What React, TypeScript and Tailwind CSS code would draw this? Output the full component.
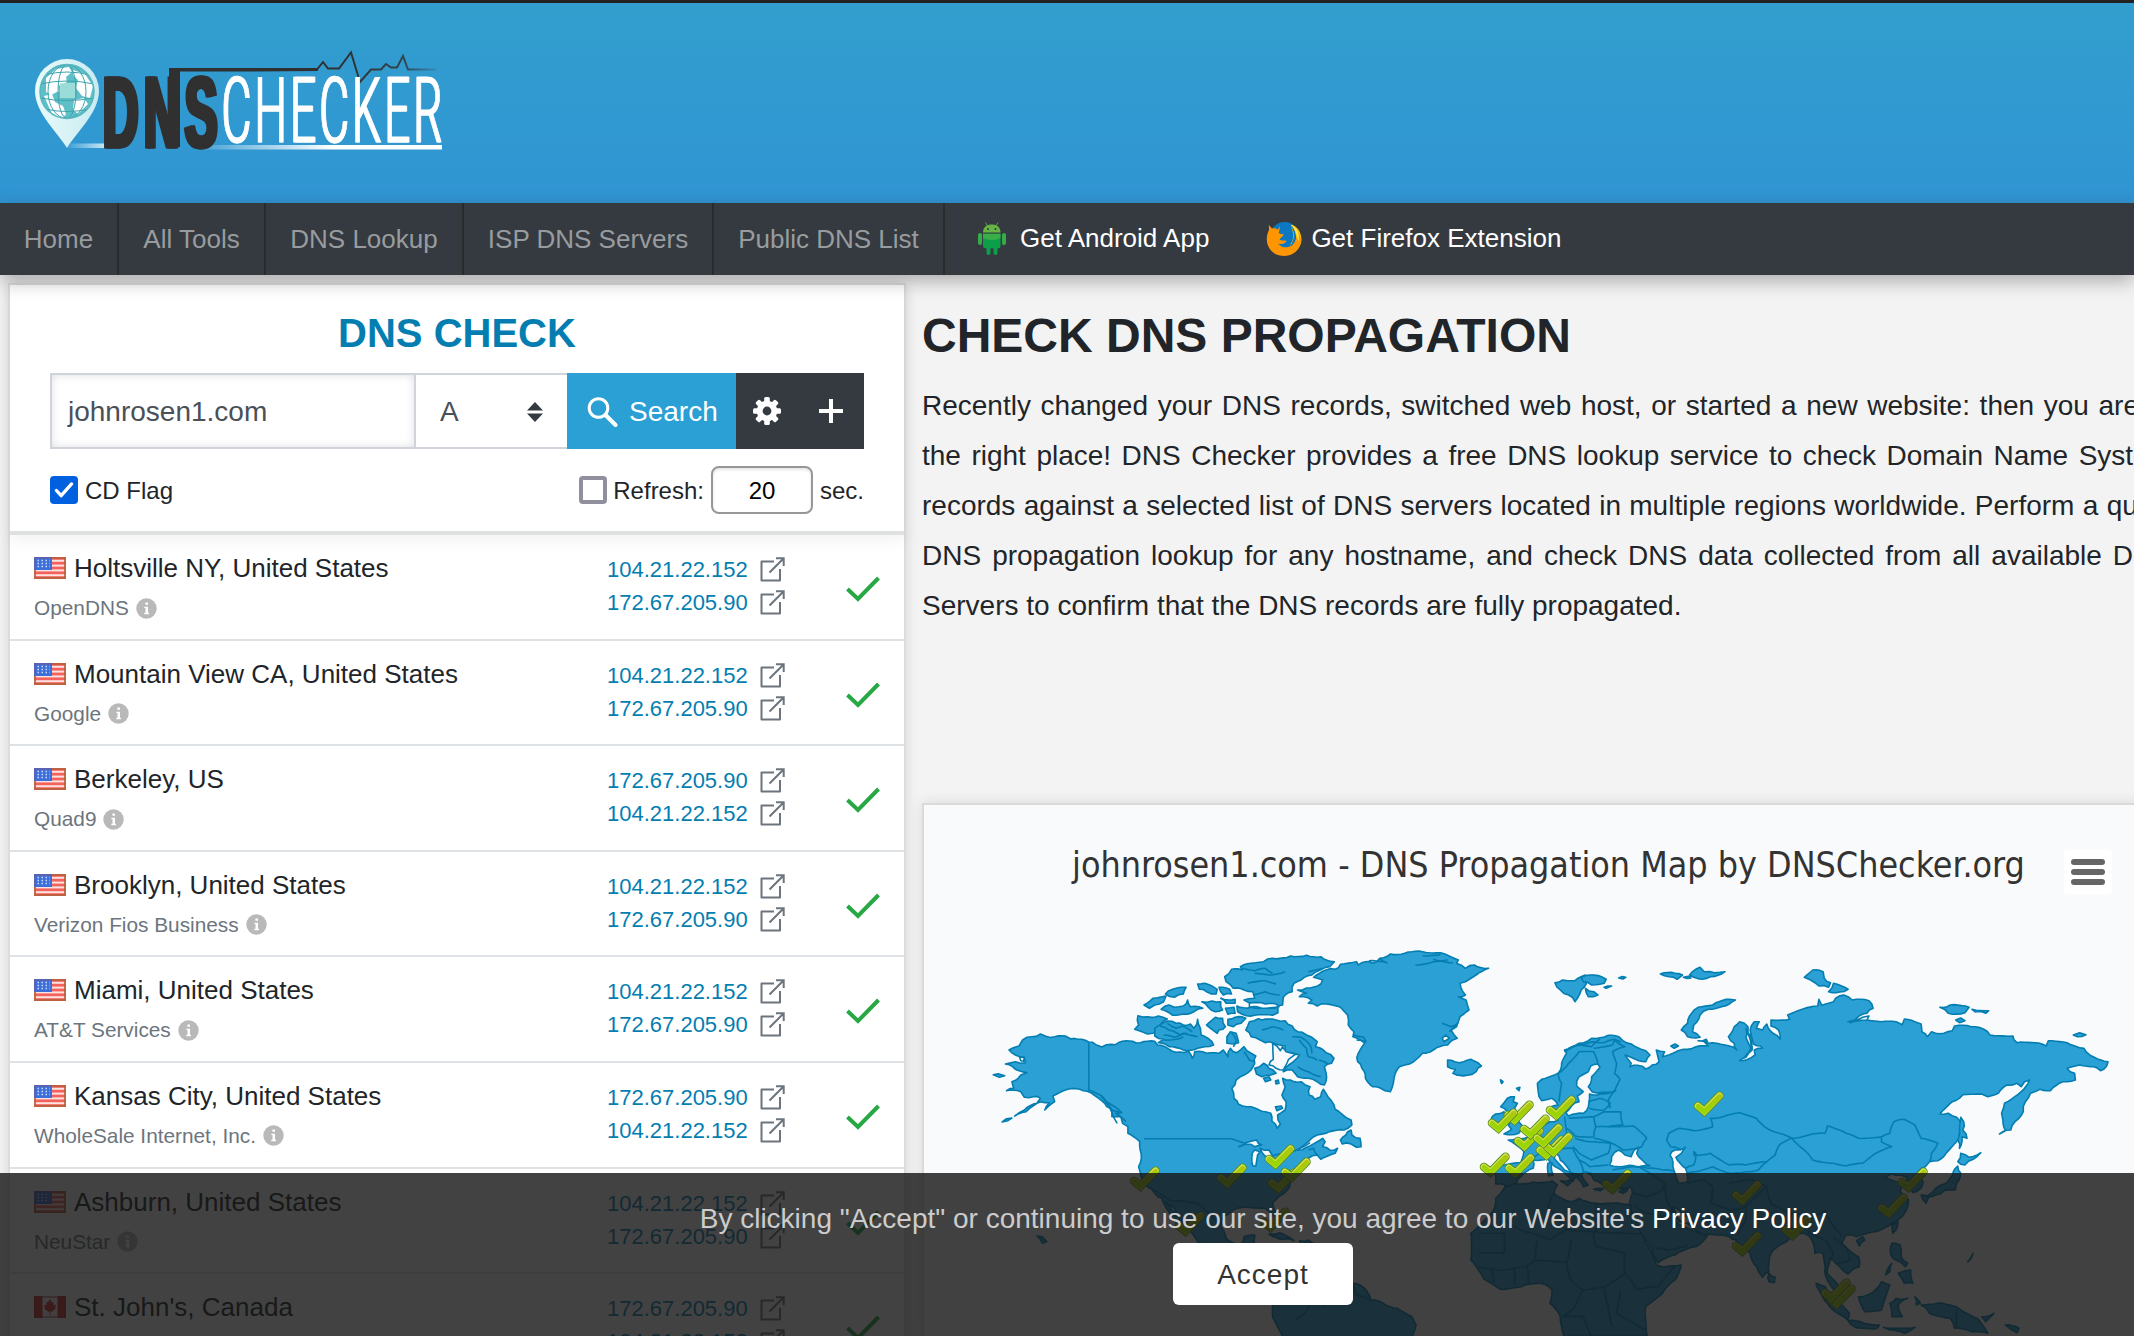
import React from "react";

type Pt = [number, number];

/* ---------- map geometry ---------- */

const west = (x: number, y: number): Pt => [970 + x / 2.8, 920 + y / 3];
const east = (x: number, y: number): Pt => [1480 + x / 2.3976, 920 + y / 3];

function points(src: string, proj: (x: number, y: number) => Pt): Pt[] {
  return src
    .trim()
    .split(/\s+/)
    .map((p) => {
      const [x, y] = p.split(",").map(Number);
      return proj(x, y);
    });
}

// Splits every edge and nudges the new points to give a coastline texture.
function rough(pts: Pt[], closed: boolean, amount: number): string {
  const out: Pt[] = [];
  const n = pts.length;
  for (let i = 0; i < n; i++) {
    out.push(pts[i]);
    if (!closed && i === n - 1) break;
    const a = pts[i];
    const b = pts[(i + 1) % n];
    const len = Math.hypot(b[0] - a[0], b[1] - a[1]);
    const steps = Math.floor(len / 3.5);
    for (let k = 1; k < steps; k++) {
      const t = k / steps;
      const r = Math.sin(a[0] * 12.9 + a[1] * 7.3 + k * 37.7) * amount;
      out.push([
        a[0] + (b[0] - a[0]) * t - ((b[1] - a[1]) / len) * r,
        a[1] + (b[1] - a[1]) * t + ((b[0] - a[0]) / len) * r,
      ]);
    }
  }
  return "M" + out.map((p) => p[0].toFixed(1) + "," + p[1].toFixed(1)).join("L") + (closed ? "Z" : "");
}

const westLand = [
  // mainland
  "112,390 140,378 150,360 175,350 200,342 215,349 240,350 270,348 285,357 305,358 335,366 355,374 372,381 385,374 410,374 440,362 458,364 480,368 520,364 528,375 560,388 590,396 615,394 625,415 632,395 665,400 700,400 712,390 725,410 732,385 750,398 770,380 790,400 803,408 800,430 790,450 770,465 748,480 736,505 742,535 755,553 790,560 820,574 845,580 848,603 863,625 872,612 864,585 885,570 888,545 876,525 885,500 878,475 900,480 930,485 955,500 952,525 968,538 985,530 992,508 1005,530 1022,555 1025,568 1045,583 1070,600 1072,615 1050,630 1000,640 975,645 950,665 920,690 945,682 990,655 997,665 990,680 1010,690 1032,685 1025,700 985,718 975,705 950,715 920,745 895,770 898,800 870,828 850,848 860,880 850,890 830,865 780,862 740,870 712,890 705,920 720,955 760,975 770,950 800,945 795,990 700,1000 640,965 600,910 575,865 550,845 580,890 592,920 560,875 540,835 520,820 500,800 482,770 475,740 482,700 478,665 445,640 445,620 430,610 425,590 400,590 395,565 380,550 350,525 320,512 280,507 250,520 235,528 240,545 212,570 225,548 200,545 160,575 128,588 155,570 190,550 200,535 180,530 155,532 145,515 105,512 125,505 120,485 145,465 162,458 130,448 102,432 130,425 158,428 155,412 130,405",
  "93,606 105,596 120,594 108,602",
  "68,464 82,461 100,467 85,472",
  // Victoria and Banks islands
  "473,287 500,290 530,288 555,297 535,315 515,340 500,342 464,328 475,315",
  "520,325 555,303 580,310 600,315 620,312 630,325 640,298 648,325 650,345 680,365 685,375 660,380 640,385 600,390 560,380 530,368 545,358 520,348",
  "665,315 690,292 710,295 718,320 700,330 695,340 680,328",
  "725,298 745,292 775,295 762,310 740,320 725,315",
  "722,350 732,335 748,340 755,368 740,372 722,370",
  // Baffin
  "775,330 785,305 810,296 820,300 860,300 885,302 905,318 920,335 945,345 960,352 975,365 970,380 1000,398 1022,415 1015,430 995,440 1000,460 995,495 975,485 950,475 920,470 905,450 880,455 895,435 925,405 905,400 880,402 885,378 870,375 850,368 830,368 815,360 790,350",
  "800,445 825,430 840,445 860,460 845,465 820,470 805,462",
  "825,475 840,470 845,480 830,485",
  "858,483 866,480 868,490 860,492",
  "858,560 875,558 878,565 862,572",
  // Ellesmere and Devon
  "760,140 790,130 825,125 850,115 900,108 945,106 985,110 1023,125 1010,140 960,165 930,180 910,190 905,215 880,232 878,255 840,258 800,252 770,240 800,235 795,215 770,210 740,205 720,185 716,170 735,148 765,150",
  "750,258 790,262 865,262 865,278 850,286 800,286 765,283 752,275",
  "640,192 660,190 695,208 692,222 665,215 645,208",
  "700,202 730,208 735,222 712,225",
  "705,235 745,238 745,250 720,250",
  "718,265 742,262 745,280 725,283",
  "490,255 515,235 552,228 545,245 520,255 505,265",
  "550,222 570,208 608,202 600,222 575,232",
  "538,268 560,255 575,262 600,258 612,240 620,260 655,265 630,275 600,282 570,286",
  "652,245 680,243 705,245 710,270 690,275 670,262",
  // Greenland
  "920,210 945,204 985,192 990,180 965,172 1000,150 1025,148 1040,133 1085,125 1090,135 1110,125 1130,130 1150,115 1180,102 1220,100 1270,95 1310,98 1340,106 1370,120 1365,130 1390,145 1415,135 1455,145 1420,165 1390,185 1375,190 1390,225 1370,230 1392,240 1400,270 1375,290 1370,305 1365,320 1350,330 1367,355 1340,375 1300,390 1270,400 1245,425 1220,435 1205,440 1190,475 1180,515 1165,512 1150,503 1130,500 1110,475 1100,445 1088,425 1090,400 1108,370 1075,350 1078,335 1062,315 1060,285 1040,262 1000,252 975,258 950,250 960,240 925,230 945,220",
  // Iceland
  "1340,420 1360,425 1385,425 1405,418 1425,428 1435,438 1420,455 1395,466 1355,460 1362,448 1340,440",
  // Newfoundland
  "1040,660 1055,645 1070,630 1072,645 1095,655 1098,680 1085,682 1070,672 1045,672",
  // Caribbean and Hawaii
  "840,942 870,938 910,962 880,958",
  "925,962 950,960 965,972 930,972",
  "190,948 205,950 218,965 206,970",
  // South America
  "850,1155 900,1120 960,1090 1010,1095 1075,1090 1105,1103 1125,1140 1160,1150 1200,1165 1240,1190 1252,1215 1240,1252 880,1252 850,1190",
  "1488,480 1495,485 1492,490",
];

const westLakes = [
  "755,680 775,668 790,664 805,660 820,675 800,680 790,673",
  "800,690 792,710 795,738 803,738 808,705 815,695",
  "815,685 840,690 850,708 838,715",
  "862,378 872,392 878,380 888,395 915,402 895,418 880,450 860,445 840,435 852,418 850,370",
  "785,250 830,252 860,252 868,260 820,265 785,262",
  "142,412 154,412 154,424 145,422",
  "1325,355 1335,345 1345,355 1330,365",
];

const westBorders = [
  "335,368 335,510 372,528 400,575 415,610",
  "850,708 905,695 955,668",
  "500,800 560,840 600,842 640,850 690,900",
  "950,690 965,685 975,705",
  "915,1200 940,1180 960,1150 1000,1160",
  "1075,1090 1080,1120 1125,1140",
  "370,530 385,545 400,555 428,578 410,580 440,605",
  "378,540 400,570 420,575 415,590",
  "535,318 560,330 590,345 610,340",
  "555,310 580,325 600,318 625,335",
  "545,345 575,352 600,340 640,350",
  "800,160 840,165 885,155",
  "765,145 800,152 830,145 850,160",
  "780,190 830,182 860,192",
  "795,225 830,215 870,225",
  "1250,135 1300,125 1340,120",
  "1120,122 1170,128 1150,115",
  "1270,108 1320,104",
  "1300,118 1355,128",
  "1325,310 1350,320 1368,310 1345,335",
  "1078,345 1105,352 1112,365 1085,360",
  "950,155 990,145",
  "545,360 580,358 600,350",
  "820,330 850,320 880,330",
  "905,350 930,352 955,375 960,400",
  "925,360 945,385 950,410 975,420",
  "980,420 1005,432",
  "920,440 950,455 985,470",
  "740,380 748,360 735,340",
  "770,395 785,420 800,425",
];

const eastLand = [
  // Eurasia
  "140,490 150,478 190,460 198,430 210,400 205,390 240,370 270,355 310,346 335,350 345,362 365,372 400,392 410,405 400,425 375,418 350,405 365,430 362,440 380,436 400,447 415,435 432,425 425,390 445,395 440,410 465,400 490,388 520,380 550,378 540,365 560,368 600,378 618,390 612,370 598,350 612,320 625,305 645,320 640,350 655,390 640,412 625,422 650,415 662,405 660,390 680,385 675,378 658,372 650,330 660,305 672,305 665,325 680,330 690,312 705,340 722,358 718,330 700,318 700,300 745,298 740,285 775,268 812,258 815,238 822,256 850,245 855,235 875,225 895,240 935,242 945,265 930,280 905,295 890,308 930,300 965,305 1000,305 1015,314 1020,297 1045,305 1060,312 1062,335 1075,350 1085,335 1115,340 1135,332 1140,318 1180,320 1210,328 1225,345 1280,348 1290,368 1350,372 1360,378 1365,362 1410,368 1450,385 1475,412 1508,425 1505,438 1490,452 1475,440 1440,435 1410,445 1428,460 1430,480 1400,485 1370,512 1345,508 1322,520 1310,545 1305,575 1285,605 1275,630 1248,642 1262,632 1256,600 1253,580 1260,550 1300,515 1320,480 1308,485 1300,500 1290,490 1265,495 1245,520 1220,530 1205,522 1160,524 1135,545 1105,582 1125,580 1145,592 1155,605 1152,640 1145,665 1120,700 1100,722 1080,725 1070,740 1050,760 1065,785 1062,800 1040,818 1035,795 1025,772 1010,765 990,762 975,775 1000,785 1015,795 1010,815 1030,840 1020,880 990,910 950,935 905,950 880,945 870,970 910,1010 912,1040 885,1062 865,1040 845,1015 835,1060 858,1090 875,1130 858,1120 835,1080 830,1040 825,1000 805,1000 800,965 780,940 750,945 730,970 700,1000 695,1055 680,1072 665,1040 650,1000 630,985 615,960 600,950 540,945 505,915 480,905 462,868 478,912 510,930 548,945 520,980 470,1005 430,1028 415,990 385,940 365,900 360,870 368,820 365,800 330,805 300,800 275,780 270,765 255,755 245,762 262,795 250,800 240,780 220,760 195,720 185,700 180,715 205,750 240,765 225,785 190,745 165,715 130,720 130,745 100,770 90,790 70,800 40,792 38,755 45,740 100,728 108,695 70,660 110,655 150,620 170,605 190,600 180,580 165,565 190,555 175,535 150,542 142,515",
  // Britain and Ireland
  "60,548 68,535 85,530 82,545 92,550 85,565 100,590 95,605 112,622 95,640 60,642 78,628 70,615 78,600 68,575 52,560",
  "40,582 60,575 62,605 30,618 28,600",
  "90,505 98,502 96,512",
  "52,480 57,485 54,490",
  // Novaya Zemlya
  "485,330 500,310 510,280 525,262 560,255 600,238 615,240 600,252 550,268 530,285 515,315 512,335 530,352 500,350",
  // Svalbard
  "182,188 200,180 230,182 255,165 260,180 245,210 230,245 215,225 195,210",
  "245,172 275,165 305,178 300,190 270,195 250,185",
  "255,205 275,215 285,225 262,230",
  "300,202 318,198 305,205",
  "335,174 352,172 345,177",
  "435,162 470,160 488,165 475,178 455,170",
  "505,165 530,142 540,155 565,158 590,155 555,170 535,178 515,172",
  "490,172 505,168 508,174",
  // Severnaya Zemlya
  "780,172 800,150 825,155 828,175 843,188 838,202 815,198 795,180",
  "838,215 850,190 885,208 865,216",
  "1105,262 1130,255 1175,262 1165,278 1125,280",
  "1182,268 1222,272 1215,280 1190,276",
  "1143,300 1155,294 1165,302 1152,308",
  "1425,345 1440,338 1455,344 1435,350",
  "460,378 470,372 478,378 468,385",
  "525,362 545,358 548,366",
  // Sakhalin
  "1155,592 1162,605 1160,630 1170,655 1158,650 1152,685 1148,660 1152,625",
  // Japan
  "1155,700 1175,712 1203,698 1185,718 1165,735 1148,725",
  "1148,738 1155,760 1145,790 1142,810 1115,812 1095,825 1070,830 1095,805 1120,790 1135,765",
  "1060,825 1078,832 1072,850",
  "990,915 1005,905 1000,930 992,940",
  "905,962 920,950 925,960 912,978",
  // Philippines, Malay archipelago
  "990,970 1010,975 1012,1010 1028,1030 1022,1040 1000,1020 988,1005",
  "1005,1060 1035,1050 1040,1090 1020,1090",
  "975,1065 990,1030 985,1055",
  "808,1090 830,1100 850,1130 888,1180 885,1200 860,1180 835,1150",
  "885,1202 920,1208 960,1215 955,1225 900,1220",
  "910,1130 940,1120 965,1085 985,1095 975,1130 965,1170 925,1175",
  "985,1150 1000,1135 1028,1135 1005,1155 1015,1190 990,1190",
  "970,1222 1045,1222 1020,1240 985,1230",
  "1060,1155 1100,1150 1150,1165 1195,1195 1220,1240 1180,1235 1140,1225 1130,1195 1080,1180",
  "1205,1190 1235,1180 1215,1205",
  "1262,1215 1295,1225 1290,1238",
  "695,1060 710,1072 708,1088 695,1085",
  "1172,1025 1185,1000 1180,1015",
  "1045,1130 1058,1150 1048,1155",
  // Mediterranean islands
  "165,730 175,728 178,765 167,768",
  "195,782 222,778 212,798",
  "275,808 298,806 290,812",
  "335,815 358,805 345,820",
  // Africa
  "62,800 85,790 130,786 175,783 188,795 180,820 220,845 240,835 280,850 330,848 365,855 372,900 400,970 425,1035 440,1040 485,1035 470,1080 440,1120 400,1160 405,1252 205,1252 195,1190 170,1150 175,1110 150,1090 110,1095 50,1107 10,1075 -20,1020 -20,940 35,870 40,835",
];

const eastLakes = [
  "285,432 290,442 270,470 262,500 272,516 328,512 292,522 265,522 262,560 250,580 215,588 208,578 222,558 240,545 236,528 250,515 234,498 240,470 262,455 268,438",
  "313,735 318,710 335,690 350,705 365,710 372,690 383,682 378,700 410,738 380,742 352,738",
  "458,705 470,690 495,682 485,700 472,712 495,745 500,785 478,788 465,740",
  "885,305 920,292 935,288 930,300 905,302",
  "640,325 648,350 652,385 638,410 650,395 655,385 650,345",
  "465,860 490,885 520,915 490,910 472,890",
  "515,695 520,700 516,706",
];

const eastBorders = [
  "192,545 198,490 190,460 215,430 240,395 275,395 285,430",
  "275,385 320,375 325,360 350,380 320,395 330,430 325,460 338,478 325,512 310,540 315,565",
  "450,660 455,640 480,625 515,632 560,620 555,595 585,590 625,578 665,595 690,625 720,640 750,655 720,675 710,705 690,725 640,735 600,735 555,700 520,705 515,735 495,745",
  "450,660 460,680 485,690",
  "750,655 790,645 830,640 835,618 880,640 910,655 965,650 985,640 995,605 1020,598 1045,615 1060,655 1100,670 1085,700 1080,725",
  "750,655 780,690 800,720 850,730 880,738 920,730 945,705 990,680 965,665 965,650",
  "690,725 670,750 640,755 600,760 560,740 520,755 500,760",
  "215,595 275,590 280,620 275,650 230,648 210,625",
  "275,590 300,575 340,575 345,615 310,620 280,620",
  "310,620 370,618 402,655 390,680 345,690 318,670 275,655",
  "230,655 265,665 315,670 310,700 270,720 240,700 225,680",
  "265,565 300,570 315,550 290,535 262,545",
  "180,690 225,685 240,720 265,740 310,735",
  "240,720 250,755 270,760",
  "130,715 160,690 150,650 110,655",
  "205,590 210,640 195,670 165,690",
  "320,750 370,740 405,745 440,750 470,755",
  "385,742 410,760 445,790 450,840 470,880",
  "500,790 540,780 560,800 555,850 600,870 640,860 690,800 650,780 600,790",
  "690,800 700,850 750,880 800,890 830,870 850,920 870,950",
  "370,820 400,830 440,810 445,790",
  "372,855 400,880 440,890 465,880",
  "425,985 450,990 500,975",
  "640,860 640,900 620,945",
  "750,880 740,910 760,940",
  "800,890 790,940 830,960 850,1000 840,1020",
  "850,950 880,980 890,1020 860,1030",
  "0,940 60,940 60,1000 0,1000",
  "60,900 110,935 170,960 210,930 280,935 280,850",
  "280,935 390,940",
  "180,820 165,860 190,900 210,930",
  "140,960 135,1020 210,1025 220,960",
  "0,1040 60,1050 110,1040 135,1020",
  "210,1025 220,1080 250,1110 300,1100 350,1060 350,1000 280,980 275,935",
  "350,1060 380,1110 430,1100 470,1040",
  "250,1110 230,1160 200,1190",
  "300,1100 310,1160 320,1220",
  "340,1110 330,1180 400,1230",
  "30,1050 35,1090",
  "85,1045 85,1095",
  "115,1040 118,1095",
  "205,1190 250,1190 270,1250",
  "1145,1170 1145,1225",
  "205,395 235,375 255,372 275,365 300,368 325,358 340,366",
  "215,385 245,375 270,380 290,358",
];

const marks: Pt[] = [
  [1130, 1166], [1217, 1163], [1268, 1168], [1281, 1157], [1265, 1144], [1175, 1211], [1260, 1207],
  [1504, 1100], [1488, 1108], [1546, 1095], [1514, 1126], [1520, 1114], [1536, 1135], [1543, 1132], [1533, 1123],
  [1480, 1152], [1505, 1153], [1602, 1169], [1694, 1091], [1732, 1180], [1782, 1215], [1732, 1231],
  [1878, 1193], [1898, 1167], [1826, 1284], [1821, 1278],
];

function Shapes({ list, proj, kind }: { list: string[]; proj: (x: number, y: number) => Pt; kind: "land" | "water" | "line" }) {
  const cls =
    kind === "land"
      ? "fill-[#2aa0d5] stroke-[#047eb1]"
      : kind === "water"
        ? "fill-[#f9fafc] stroke-[#047eb1]"
        : "fill-none stroke-[#047eb1]";
  return (
    <>
      {list.map((s, i) => (
        <path
          key={i}
          d={rough(points(s, proj), kind !== "line", kind === "line" ? 0.7 : 1.1)}
          className={cls}
          strokeWidth="1.6"
          strokeLinejoin="round"
        />
      ))}
    </>
  );
}

function WorldMap() {
  return (
    <svg viewBox="925 905 1209 431" className="block h-[431px] w-[1209px]">
      <defs>
        <linearGradient id="mark" gradientUnits="userSpaceOnUse" x1="0" y1="3" x2="0" y2="22">
          <stop offset="0" stopColor="#b3c410" />
          <stop offset="1" stopColor="#97d800" />
        </linearGradient>
      </defs>
      <Shapes list={westLand} proj={west} kind="land" />
      <Shapes list={westLakes} proj={west} kind="water" />
      <Shapes list={westBorders} proj={west} kind="line" />
      <path d="M1145,1138.7H1232.5L1245,1143" className="fill-none stroke-[#047eb1]" strokeWidth="1.6" />
      <Shapes list={eastLand} proj={east} kind="land" />
      <Shapes list={eastLakes} proj={east} kind="water" />
      <Shapes list={eastBorders} proj={east} kind="line" />
      {marks.map(([x, y], i) => (
        <g key={i} transform={`translate(${x} ${y})`} fill="none" strokeLinecap="round" strokeLinejoin="miter">
          <path d="M5 15 11.400 20.200 26.500 4.800" stroke="#5f8f16" strokeWidth="8.600" />
          <path d="M5 15 11.400 20.200 26.500 4.800" stroke="#d0e65a" strokeWidth="6.600" />
          <path d="M5.200 15.500 11.400 20.600 26.800 5.300" stroke="url(#mark)" strokeWidth="5" />
        </g>
      ))}
    </svg>
  );
}

/* ---------- icons ---------- */

function Logo() {
  return (
    <svg viewBox="30 45 416 110" className="block h-[110px] w-[416px]">
      <defs>
        <linearGradient id="under" x1="0" x2="1">
          <stop offset="0" stopColor="#fff" stopOpacity="0.1" />
          <stop offset="0.55" stopColor="#fff" />
        </linearGradient>
        <linearGradient id="under2" x1="0" x2="1">
          <stop offset="0" stopColor="#c6e8f5" stopOpacity="0.1" />
          <stop offset="1" stopColor="#c6e8f5" />
        </linearGradient>
        <linearGradient id="pulse" gradientUnits="userSpaceOnUse" x1="340" x2="438" y1="0" y2="0">
          <stop offset="0" stopColor="#303030" />
          <stop offset="0.65" stopColor="#303030" stopOpacity="0.8" />
          <stop offset="1" stopColor="#303030" stopOpacity="0.1" />
        </linearGradient>
        <linearGradient id="pin" x1="0" x2="1">
          <stop offset="0" stopColor="#e9fafa" />
          <stop offset="1" stopColor="#c9ebf1" />
        </linearGradient>
        <clipPath id="globe">
          <circle cx="67" cy="91.500" r="27" />
        </clipPath>
      </defs>
      <rect x="68" y="143.500" width="37" height="4.500" fill="url(#under2)" />
      <rect x="200" y="145" width="242" height="4.500" fill="url(#under)" />
      <path d="M67 148C59 134 35 113 35 91a32 32 0 0 1 64 0C99 113 75 134 67 148Z" fill="url(#pin)" />
      <circle cx="67" cy="91.500" r="27" fill="#5fbfc6" />
      <g clipPath="url(#globe)">
        <path d="M46 78l10-9 13-2 3 5-6 5 1 5-9 4 1 5-8 4-5-3ZM73 70l12 4 8 12-3 12-8-2-6-8 2-8-5-5ZM44 96l8-2 3 8 8 4 3 8-4 5-10-5ZM74 100l10-2 4 6-10 10-5-4Z" fill="#fff" />
        <g fill="none" stroke="#3fa3ac" strokeWidth="1">
          <ellipse cx="67" cy="91.500" rx="9" ry="27" />
          <ellipse cx="67" cy="91.500" rx="19" ry="27" />
          <path d="M40 84Q67 78 94 84M40 98Q67 103 94 98M44 75Q67 69 90 75M45 109Q67 114 90 109" />
        </g>
        <rect x="60" y="83" width="15" height="15" fill="#a6e0dc" opacity="0.85" />
      </g>
      <circle cx="67" cy="91.500" r="27" fill="none" stroke="#58b6c0" strokeWidth="1.500" />
      <g id="dns" fill="#303030" stroke="#303030" fontFamily="Liberation Sans" fontWeight="700">
        <text transform="translate(101.500 147) scale(.485 1)" fontSize="101" strokeWidth="3" textLength="236" lengthAdjust="spacing">DNS</text>
      </g>
      <use href="#dns" x="1.500" />
      <use href="#dns" x="3" />
      <path d="M169 68H318V71L246 71.500H180V147H169Z" fill="#303030" />
      <path d="M317 69.500 323 62 328 68.500H339L351 52.500 360 82 371 69.500H381L386 64 391 67.500H397L403 56 408 69.500H437" fill="none" stroke="url(#pulse)" strokeWidth="2" />
      <g id="checker" fill="#fff" stroke="#fff" fontFamily="Roboto" fontWeight="300">
        <text transform="translate(221 142) scale(.502 1)" fontSize="91" strokeWidth="1.200" textLength="440" lengthAdjust="spacing">CHECKER</text>
      </g>
      <use href="#checker" x="1.200" />
    </svg>
  );
}

function AndroidIcon() {
  return (
    <svg viewBox="0 0 30 34" className="block h-[34px] w-[30px]">
      <path d="M8.500.5 10.500 4M21 .5 19 4" stroke="#63a33b" strokeWidth="1" />
      <path d="M6 10.500C6 5 10 2.500 14.800 2.500S23.500 5 23.500 10.500Z" fill="#66b445" />
      <circle cx="11" cy="7" r="1" fill="#343a40" />
      <circle cx="18.500" cy="7" r="1" fill="#343a40" />
      <path d="M6 11.700H23.500V24a2.300 2.300 0 0 1-2.300 2.300H8.300A2.300 2.300 0 0 1 6 24Z" fill="#0c9e49" />
      <path d="M6 11.700H23.500V16Q15 20 6 16Z" fill="#3aae49" />
      <rect x="1" y="11" width="4" height="12" rx="2" fill="#35ab49" />
      <rect x="25" y="11" width="4" height="12" rx="2" fill="#35ab49" />
      <rect x="9.500" y="24" width="4" height="9" rx="2" fill="#0c9e49" />
      <rect x="16.500" y="24" width="4" height="9" rx="2" fill="#0c9e49" />
    </svg>
  );
}

function FirefoxIcon() {
  return (
    <svg viewBox="0 0 36 36" className="block h-9 w-9">
      <circle cx="18.500" cy="15.500" r="14.500" fill="#0a78c2" />
      <path d="M25 3.500C31 5 35.500 11 35.500 19A17 17 0 0 1 22 34L24 24C28 20 28 12 25 5Z" fill="#ffcb00" />
      <path d="M23.500 3C28 8 29.500 16 25.500 23L22 26 28 25C32 17 30 8 23.500 3Z" fill="#0a78c2" />
      <path d="M31 9C34.500 14 36 18 34.500 23A17.300 17.300 0 0 1 18 35C8 35 .8 27.500.8 18.500.8 13 2.500 10.500 3 9L2.800 4 6 7.500C8.500 6.800 10.500 7.500 12 8.800L13.500 5C14 8 13.500 10 12.500 11.500 14 13.500 16 13 18 13.500 17 15.500 14.500 16.500 13.500 18.500 16 20.500 18 18.500 20.500 20 19 22.500 16 24 12 22.500 16 27.500 22 27 26 24.500 30 20 32 15 31 9Z" fill="#ff9500" />
      <path d="M26 4C32 8 34 14 32.500 21 31 13 29 9 26 4Z" fill="#ffe14d" />
    </svg>
  );
}

function UsFlag() {
  return (
    <svg viewBox="0 0 32 22" className="block h-[22px] w-8 shrink-0">
      <rect width="32" height="22" fill="#fbe3e0" />
      {[0, 4.8, 9.600, 14.400, 19.200].map((y) => (
        <rect key={y} y={y} width="32" height="2.800" fill="#f4625e" />
      ))}
      <rect width="18" height="13" fill="#3c6fd8" />
      {[3.500, 6.500, 9.500].map((y) => (
        <path key={y} d={`M3.500 ${y}H16`} stroke="#c9dafa" strokeWidth="1.300" strokeDasharray="1.500 2.500" />
      ))}
      <path d="M1 13V21H31V1H18" fill="none" stroke="#b5603c" strokeWidth="2" opacity="0.85" />
      <path d="M1 13V1H18" fill="none" stroke="#5b62b4" strokeWidth="2" />
    </svg>
  );
}

function CaFlag() {
  return (
    <svg viewBox="0 0 32 22" className="block h-[22px] w-8 shrink-0">
      <rect width="32" height="22" fill="#f7efef" />
      <rect width="8.500" height="22" fill="#d82a2a" />
      <rect x="23.500" width="8.500" height="22" fill="#d82a2a" />
      <path d="M16 3 18 6.500 19.500 6 19.500 9.500 22 8.500 21 11.500 22 12.500 18 15.500H16.500V19H15.500V15.500H14L10 12.500 11 11.500 10 8.500 12.500 9.500V6L14 6.500Z" fill="#e02b2b" />
      <rect x="1" y="1" width="30" height="20" fill="none" stroke="#a33" strokeWidth="1.500" opacity="0.6" />
    </svg>
  );
}

function InfoIcon() {
  return (
    <svg viewBox="0 0 21 21" className="block h-[21px] w-[21px]">
      <circle cx="10.500" cy="10.500" r="10.200" fill="#b9b9b9" />
      <path d="M9.400 4.500h2.600v2.300h-2.600ZM8.300 8.700h3.700v6.100H13v1.400H8.300v-1.400H9.500V10.100H8.300Z" fill="#fff" />
    </svg>
  );
}

function ExternalIcon() {
  return (
    <svg viewBox="0 0 25 25" className="block h-[25px] w-[25px]" fill="none" stroke="#6c757d" strokeWidth="2">
      <path d="M14 4.500H1.500V23.500H20V12" strokeLinejoin="round" />
      <path d="M9.500 15.500 23.500 1.500M16 1.300H23.700V9" />
    </svg>
  );
}

function CheckIcon() {
  return (
    <svg viewBox="0 0 34 26" className="block h-[26px] w-[34px]">
      <path d="M1.500 13 12 23 32.500 2" fill="none" stroke="#28a745" strokeWidth="4" />
    </svg>
  );
}

/* ---------- data ---------- */

const a = "104.21.22.152";
const b = "172.67.205.90";
const servers = [
  { place: "Holtsville NY, United States", isp: "OpenDNS", ips: [a, b] },
  { place: "Mountain View CA, United States", isp: "Google", ips: [a, b] },
  { place: "Berkeley, US", isp: "Quad9", ips: [b, a] },
  { place: "Brooklyn, United States", isp: "Verizon Fios Business", ips: [a, b] },
  { place: "Miami, United States", isp: "AT&T Services", ips: [a, b] },
  { place: "Kansas City, United States", isp: "WholeSale Internet, Inc.", ips: [b, a] },
  { place: "Ashburn, United States", isp: "NeuStar", ips: [a, b] },
  { place: "St. John's, Canada", isp: "", ips: [b, a] },
];

const nav = [
  { label: "Home", cls: "w-[119px]" },
  { label: "All Tools", cls: "w-[147px]" },
  { label: "DNS Lookup", cls: "w-[198px]" },
  { label: "ISP DNS Servers", cls: "w-[250px]" },
  { label: "Public DNS List", cls: "w-[231px]" },
];

const intro = [
  "Recently changed your DNS records, switched web host, or started a new website: then you are at",
  "the right place! DNS Checker provides a free DNS lookup service to check Domain Name System",
  "records against a selected list of DNS servers located in multiple regions worldwide. Perform a quick",
  "DNS propagation lookup for any hostname, and check DNS data collected from all available DNS",
];

/* ---------- page ---------- */

function ServerRow({ place, isp, ips }: { place: string; isp: string; ips: string[] }) {
  return (
    <div className="flex h-[105.6px] border-b-2 border-[#dee2e6] pl-6">
      <div className="w-[573px] pt-[15px]">
        <div className="flex items-center gap-2 whitespace-nowrap text-[26px] leading-9 text-[#212529]">
          {place.includes("Canada") ? <CaFlag /> : <UsFlag />}
          {place}
        </div>
        {isp && (
          <div className="mt-1 flex items-center gap-[7px] whitespace-nowrap text-[20.800px] leading-9 text-[#6c757d]">
            {isp}
            <InfoIcon />
          </div>
        )}
      </div>
      <div className="w-[239px] pt-[18px]">
        {ips.map((ip) => (
          <div key={ip} className="flex h-[33px] items-center text-[22px] leading-[33px] text-[#047eb1]">
            <span className="w-[153px]">{ip}</span>
            <ExternalIcon />
          </div>
        ))}
      </div>
      <div className="pt-[41px]">
        <CheckIcon />
      </div>
    </div>
  );
}

export default function App() {
  return (
    <div className="relative flex h-[1336px] w-[2134px] flex-col overflow-hidden bg-[#f3f3f3] font-['Liberation_Sans',sans-serif]">
      <header className="h-[203px] shrink-0 border-t-[3px] border-[#222] bg-gradient-to-b from-[#329ece] to-[#3095d3] pl-[30px] pt-[42px]">
        <Logo />
      </header>
      <nav className="relative z-10 flex h-[72px] shrink-0 bg-[#343a40] shadow-[0_6px_18px_rgba(0,0,0,0.3)]">
        {nav.map((n) => (
          <a key={n.label} className={`${n.cls} flex items-center justify-center whitespace-nowrap border-r-2 border-[#2b2b2b] pt-px text-[26px] text-[#999c9f]`}>
            {n.label}
          </a>
        ))}
        <a className="ml-8 flex items-center gap-[13px] pb-px text-[26px] text-white">
          <AndroidIcon />
          Get Android App
        </a>
        <a className="ml-[57px] flex items-center gap-[9px] pb-px text-[26px] text-white">
          <FirefoxIcon />
          Get Firefox Extension
        </a>
      </nav>

      <div className="flex">
        <aside className="ml-2 mt-2 w-[898px] shrink-0 border-2 border-[#dcdcdc] bg-white shadow-[0_0_12px_rgba(0,0,0,0.12)]">
          <section className="relative h-[250px] border-b-[4px] border-[#dfe0e0] px-10 shadow-[0_6px_14px_rgba(0,0,0,0.05)]">
            <h2 className="pt-[22px] text-center text-[40px] font-bold leading-[52px] text-[#047eb1]">DNS CHECK</h2>
            <div className="mt-[14px] flex h-[76px] text-[28px] text-[#495057]">
              <div className="flex w-[366px] items-center border-2 border-[#ced4da] pl-4 pt-0.5 shadow-[inset_0_0_10px_rgba(0,0,0,0.12)]">
                johnrosen1.com
              </div>
              <div className="flex w-[151px] items-center justify-between border-y-2 border-[#ced4da] pl-6 pr-6 pt-0.5">
                A
                <svg viewBox="0 0 16 20" className="h-5 w-4">
                  <path d="M8 0 16 8.500H0ZM8 20 0 11.500H16Z" fill="#343a40" />
                </svg>
              </div>
              <div className="flex w-[169px] items-center gap-[11px] bg-[#2aa0d5] pl-5 pt-px text-white">
                <svg viewBox="0 0 31 31" className="h-[31px] w-[31px] shrink-0" fill="none" stroke="#fff">
                  <circle cx="11.500" cy="12" r="9.300" strokeWidth="3" />
                  <path d="M18.500 19 28.500 29" strokeWidth="4" strokeLinecap="round" />
                </svg>
                Search
              </div>
              <div className="flex w-32 items-center bg-[#343a40] pl-[17px]">
                <svg viewBox="0 0 28 28" className="h-7 w-7">
                  <g transform="translate(14 14)" fill="#fff">
                    {[0, 45, 90, 135].map((r) => (
                      <rect key={r} x="-2.800" y="-14" width="5.600" height="28" rx="1.500" transform={`rotate(${r})`} />
                    ))}
                    <circle r="10.300" />
                    <circle r="4.400" fill="#343a40" />
                  </g>
                </svg>
                <svg viewBox="0 0 24 24" className="ml-[38px] h-6 w-6">
                  <path d="M12 .5V23.500M.5 12H23.500" stroke="#fff" strokeWidth="4" strokeLinecap="round" />
                </svg>
              </div>
            </div>
            <div className="mt-[17px] flex h-12 items-center text-[24px] text-[#212529]">
              <span className="flex h-7 w-7 items-center justify-center rounded bg-[#0060df]">
                <svg viewBox="0 0 20 18" className="h-[17px] w-5">
                  <path d="M2 9 7 14.500 18 2" fill="none" stroke="#fff" strokeWidth="3.500" strokeLinecap="round" strokeLinejoin="round" />
                </svg>
              </span>
              <span className="ml-[7px] pt-0.5">CD Flag</span>
              <span className="ml-auto h-7 w-7 rounded border-4 border-[#8f8f9d]" />
              <span className="ml-[6px] pt-0.5">Refresh:</span>
              <span className="ml-[7px] flex h-12 w-[102px] items-center justify-center rounded-lg border-2 border-[#979797] pt-0.5 text-black shadow-[inset_0_2px_3px_rgba(0,0,0,0.1)]">
                20
              </span>
              <span className="ml-[7px] pt-0.5">sec.</span>
            </div>
          </section>
          {servers.map((s) => (
            <ServerRow key={s.place} {...s} />
          ))}
        </aside>

        <main className="ml-4 w-[1250px] shrink-0">
          <h1 className="pt-[31px] text-[48px] font-bold leading-[60px] text-[#212529]">CHECK DNS PROPAGATION</h1>
          <div className="mt-[15px] w-[1250px] text-[28px] leading-[50px] text-[#212529]">
            {intro.map((line) => (
              <p key={line} className="whitespace-nowrap text-justify [text-align-last:justify]">
                {line}
              </p>
            ))}
            <p>Servers to confirm that the DNS records are fully propagated.</p>
          </div>
          <div className="mt-[172px] w-[1250px] border-2 border-[#dadada] bg-[#f9fafc] shadow-[0_0_14px_rgba(0,0,0,0.1)]">
            <div className="flex h-[100px] pl-[148px] pt-[37px]">
              <div className="w-[992px] whitespace-nowrap font-['DejaVu_Sans_Condensed','DejaVu_Sans',sans-serif] text-[35.500px] leading-[46px] text-[#333]">
                johnrosen1.com - DNS Propagation Map by DNSChecker.org
              </div>
              <div className="mt-2 flex h-11 w-12 flex-col items-center justify-center gap-1 rounded bg-white">
                <span className="h-[6px] w-[34px] rounded-[3px] bg-[#666]" />
                <span className="h-[6px] w-[34px] rounded-[3px] bg-[#666]" />
                <span className="h-[6px] w-[34px] rounded-[3px] bg-[#666]" />
              </div>
            </div>
            <WorldMap />
          </div>
        </main>
      </div>

      <div className="absolute inset-x-0 bottom-0 z-20 flex h-[163px] flex-col items-center bg-[rgba(22,22,22,0.81)] pl-[392px] pt-[26px] text-[28px] text-[#ccc]">
        <p className="whitespace-nowrap leading-[40px]">
          By clicking "Accept" or continuing to use our site, you agree to our Website's <a className="text-white">Privacy Policy</a>
        </p>
        <button className="mt-1 h-[62px] w-[180px] rounded-md bg-white pt-0.5 tracking-[1px] text-[#333]">Accept</button>
      </div>
    </div>
  );
}
